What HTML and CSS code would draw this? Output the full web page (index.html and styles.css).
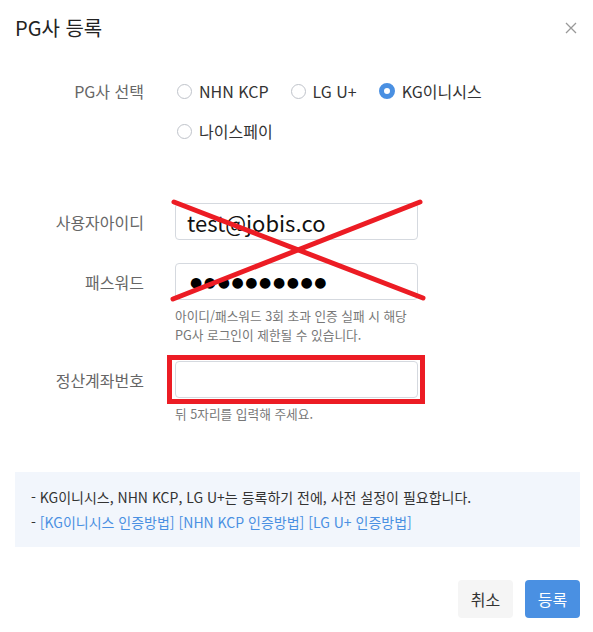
FILE: index.html
```html
<!DOCTYPE html>
<html lang="ko">
<head>
<meta charset="utf-8">
<link rel="stylesheet" href="styles.css">
</head>
<body>
<div class="modal">
  <div class="header">
    <h1 class="title">PG사 등록</h1>
    <svg class="close" width="12" height="12" viewBox="0 0 12 12"><path d="M1 1L11 11M11 1L1 11" stroke="#999" stroke-width="1.3" fill="none"/></svg>
  </div>

  <div class="row row-radio">
    <div class="label">PG사 선택</div>
    <div class="radios">
      <label class="radio"><span class="circle"></span>NHN KCP</label>
      <label class="radio"><span class="circle"></span>LG U+</label>
      <label class="radio"><span class="circle checked"></span>KG이니시스</label>
      <label class="radio"><span class="circle"></span>나이스페이</label>
    </div>
  </div>

  <div class="cred">
    <div class="row row-input">
      <div class="label">사용자아이디</div>
      <div class="field"><div class="input big">test@jobis.co</div></div>
    </div>
    <div class="row row-input second">
      <div class="label">패스워드</div>
      <div class="field">
        <div class="input big dots">●●●●●●●●●●</div>
      </div>
    </div>
    <div class="help-row">
      <p class="help">아이디/패스워드 3회 초과 인증 실패 시 해당<br>PG사 로그인이 제한될 수 있습니다.</p>
    </div>
    <svg class="cross" width="265" height="112" viewBox="0 0 265 112">
      <path d="M9 7L258 103M8 104L255 7" stroke="#ec1c24" stroke-width="5" stroke-linecap="round" fill="none"/>
    </svg>
  </div>

  <div class="row row-input third">
    <div class="label">정산계좌번호</div>
    <div class="field marked">
      <div class="input"></div>
      <div class="redbox"></div>
    </div>
  </div>
  <div class="help-row">
    <p class="help">뒤 5자리를 입력해 주세요.</p>
  </div>

  <div class="info">
    <p>- KG이니시스, NHN KCP, LG U+는 등록하기 전에, 사전 설정이 필요합니다.</p>
    <p>- <a>[KG이니시스 인증방법]</a> <a>[NHN KCP 인증방법]</a> <a>[LG U+ 인증방법]</a></p>
  </div>

  <div class="footer">
    <button class="btn cancel">취소</button>
    <button class="btn primary">등록</button>
  </div>
</div>
</body>
</html>
```

FILE: styles.css
```css
* { box-sizing: border-box; }
html, body { margin: 0; padding: 0; background: #fff; }
body {
  font-family: "Noto Sans CJK KR", "Noto Sans", sans-serif;
  color: #333;
}
.modal {
  width: 593px;
  padding: 0 13px 0 15px;
}
.header {
  display: flex;
  align-items: center;
  justify-content: space-between;
  height: 56px;
  padding-right: 3px;
}
.title {
  margin: 0;
  font-size: 20px;
  font-weight: 400;
  color: #222;
  line-height: 24px;
}
.close { display: block; }

.row { display: flex; }
.label {
  width: 129px;
  margin-right: 31px;
  text-align: right;
  font-size: 16px;
  color: #666;
  flex: none;
}
.row-radio { margin-top: 25px; }
.row-radio .label { line-height: 20px; }
.radios {
  display: flex;
  flex-wrap: wrap;
  row-gap: 20px;
  width: 330px;
}
.radio {
  display: flex;
  align-items: center;
  height: 20px;
  font-size: 16px;
  color: #333;
  margin-right: 20px;
  padding-left: 2px;
}
.circle {
  width: 15px;
  height: 15px;
  border: 1px solid #bfc3ca;
  border-radius: 50%;
  margin-right: 7px;
  background: #fff;
}
.circle.checked {
  border: 5px solid #4a90e2;
  background: #fff;
  width: 16px;
  height: 16px;
}

.cred { position: relative; margin-top: 62px; }
.row-input { align-items: center; }
.row-input.second { margin-top: 23px; }
.row-input.third { margin-top: 17px; }
.field { position: relative; }
.input {
  width: 243px;
  height: 37px;
  border: 1px solid #d5d9df;
  border-radius: 4px;
  background: #fff;
  padding: 0 11px;
  display: flex;
  align-items: center;
}
.big {
  font-size: 22px;
  color: #111;
}
.dots {
  font-size: 14px;
  letter-spacing: 1.6px;
  font-family: "DejaVu Sans", sans-serif;
  padding-left: 14px;
  color: #000;
}
.help-row { padding-left: 160px; }
.help {
  margin: 6px 0 0;
  font-size: 12.7px;
  line-height: 19px;
  color: #777;
}
.cross {
  position: absolute;
  left: 150px;
  top: -8px;
}
.redbox {
  position: absolute;
  left: -8px;
  top: -6px;
  right: -7px;
  bottom: -6px;
  border: 5px solid #ec1c24;
}

.info {
  margin-top: 49px;
  background: #f2f6fc;
  padding: 13px 16px 12px;
  width: 565px;
}
.info p {
  margin: 0;
  font-size: 14px;
  line-height: 25px;
  color: #333;
}
.info a { color: #4a90e2; }

.footer {
  display: flex;
  justify-content: flex-end;
  gap: 12px;
  margin-top: 33px;
  width: 565px;
}
.btn {
  width: 55px;
  height: 38px;
  border: none;
  border-radius: 4px;
  font-family: "Noto Sans CJK KR", sans-serif;
  font-size: 16px;
}
.cancel { background: #f5f5f5; color: #333; }
.primary { background: #4a90e2; color: #fff; }
```
